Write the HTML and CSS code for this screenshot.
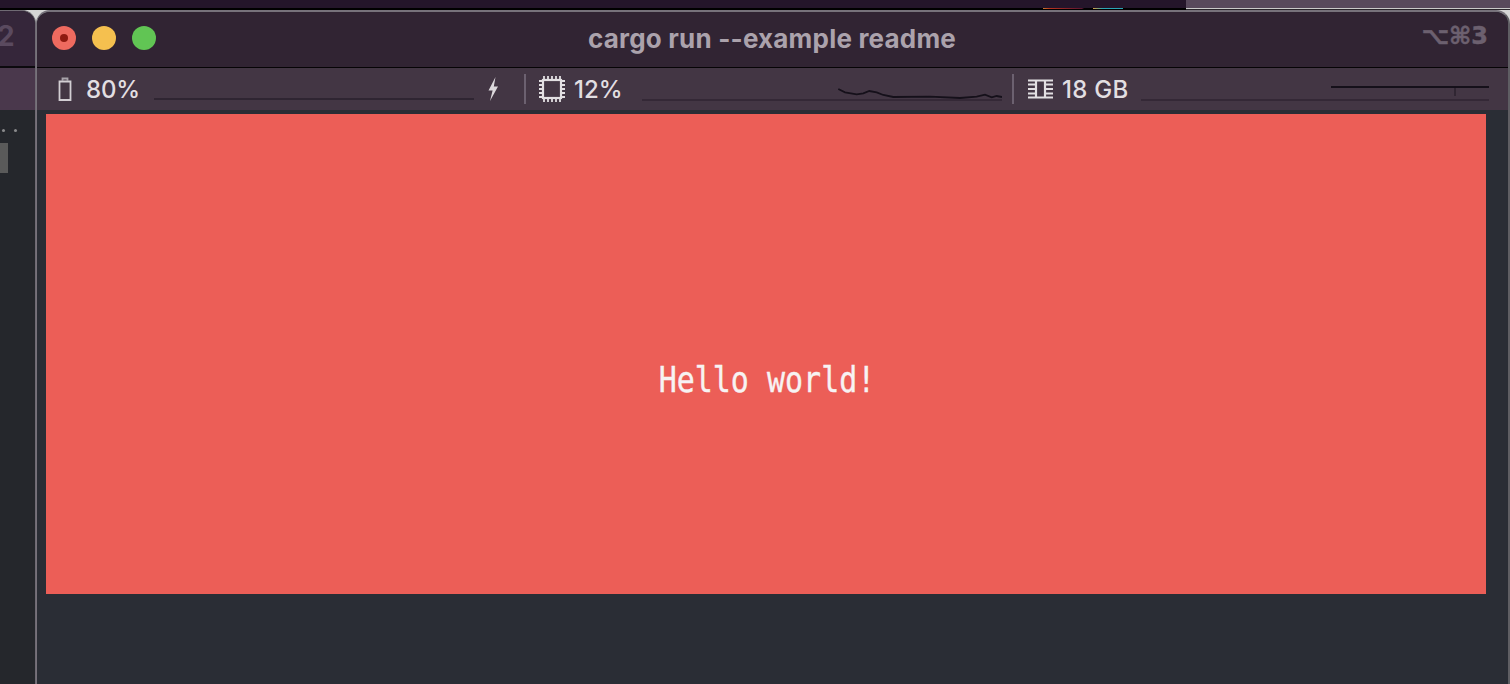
FILE: index.html
```html
<!DOCTYPE html>
<html lang="en">
<head>
<meta charset="utf-8">
<title>cargo run --example readme</title>
<link rel="stylesheet" href="styles.css">
</head>
<body>
<div class="desktop">
  <div class="strip"></div>

  <section class="window back">
    <div class="back-title"><span class="back-num">2</span></div>
    <div class="back-status"></div>
    <div class="back-body">
      <div class="dots"><i></i><i></i></div>
      <div class="block"></div>
    </div>
  </section>

  <section class="window front">
    <header class="titlebar">
      <div class="lights">
        <span class="light red"><i></i></span>
        <span class="light yellow"></span>
        <span class="light green"></span>
      </div>
      <div class="title">cargo run --example readme</div>
      <div class="shortcut">⌥⌘3</div>
    </header>
    <div class="status">
      <svg class="ico battery" width="14" height="25" viewBox="0 0 14 25" fill="none" stroke="#d2ced3" stroke-width="1.8"><path d="M1.500 4.500h11v18.500h-11z"/><path d="M4.500 4V1.500h5V4" stroke="#a8a3aa"/></svg>
      <span class="stat s-bat">80%</span>
      <span class="graph g-bat"></span>
      <svg class="ico bolt" width="12" height="26" viewBox="0 0 12 26"><path d="M8.500 1 1.500 14.500H5.600L3 25 11 10.500H6.800Z" fill="#dcd8dc"/></svg>
      <span class="divider d-1"></span>
      <svg class="ico cpu" width="26" height="26" viewBox="0 0 26 26" fill="none" stroke="#e2dfe2"><rect x="4" y="4" width="18" height="18" stroke-width="2.200"/><path stroke-width="1.800" d="M5 0v4M9 0v4M13 0v4M17 0v4M21 0v4M5 22v4M9 22v4M13 22v4M17 22v4M21 22v4M0 5h4M0 9h4M0 13h4M0 17h4M0 21h4M22 5h4M22 9h4M22 13h4M22 17h4M22 21h4"/></svg>
      <span class="stat s-cpu">12%</span>
      <svg class="graph-svg g-cpu" width="360" height="20" viewBox="0 0 360 20" fill="none"><path d="M0 18H360" stroke="#2f2532" stroke-width="1.500"/><polyline points="196.300,7 203,10.300 214.700,12.300 221.300,11.300 227.300,9 234.700,10.300 241.300,13 251.300,15 288,14.700 318,16 334.700,14.700 343,12.700 349.700,15.300 354.700,14 360,15" stroke="#15101a" stroke-width="1.800"/></svg>
      <span class="divider d-2"></span>
      <svg class="ico mem" width="25" height="20" viewBox="0 0 25 20" fill="none" stroke="#e2dfe2"><path stroke-width="2.200" d="M8 1.500H17M8 18.500H17M8 1.500V18.500M17 1.500V18.500"/><path stroke-width="1.800" d="M0 1.500H8M0 5.500H8M0 10H8M0 14.500H8M0 18.500H8M17 1.500H25M17 5.500H25M17 10H25M17 14.500H25M17 18.500H25"/></svg>
      <span class="stat s-mem">18 GB</span>
      <svg class="graph-svg g-mem" width="348" height="20" viewBox="0 0 348 20" fill="none"><path d="M0 18H348" stroke="#2f2532" stroke-width="1.500"/><path d="M190 5H348" stroke="#15101a" stroke-width="1.800"/><path d="M314 5V14" stroke="#15101a" stroke-width=".8"/></svg>
    </div>
    <main class="content">
      <div class="panel"><span class="hello">Hello world!</span></div>
    </main>
  </section>
</div>
</body>
</html>
```
FILE: styles.css
```css
* { box-sizing: border-box; }
html, body { margin: 0; height: 100%; overflow: hidden; background: #222327; }
.desktop { position: relative; width: 1510px; height: 684px; overflow: hidden; background: #d6d6d6; }

.strip {
  height: 10px;
  background:
    linear-gradient(90deg, #000 0 1043px, #c8792f 1043px, #b8321f 1050px, #5a1530 1082px, #000 1084px, #000 1093px, #d89a40 1093px, #2aa5b5 1103px, #2aa5b5 1123px, #000 1123px, #000 1186px, #c9c9c9 1186px) 0 8px / 100% 1px no-repeat,
    linear-gradient(#24152a 0 8px, #000 8px) 0 0 / 1186px 100% no-repeat,
    linear-gradient(#58495c 0 8px, #2a262c 8px);
}

.window { position: absolute; top: 10px; bottom: 0; overflow: hidden; }

.back { left: -40px; width: 76px; border-radius: 0 14px 0 0; border: solid #6f6a73; border-width: 1px 1px 0 0; background: #25272c; font-family: "Inter", "Liberation Sans", sans-serif; }
.back-title { height: 57px; background: #35263a; border-bottom: 2px solid #0c0a0e; padding: 6px 0 0 37px; }
.back-num { color: #5a4a5f; font-size: 28px; font-weight: 700; line-height: 38px; }
.back-status { height: 42px; background: #4a384c; }
.back-body { padding: 19px 0 0 40px; }
.dots { display: flex; gap: 9px; padding-left: 2px; }
.dots i { width: 3px; height: 3px; border-radius: 50%; background: #8a8a8c; }
.block { width: 8px; height: 30px; margin-top: 11px; background: #5a5a5a; }

.front { left: 36px; right: 0; border-radius: 14px 14px 0 0; border: solid #77727b; border-width: 2px 2px 0 1px; border-right-color: #5f5e63; background: #2a2d35; font-family: "Inter", "Liberation Sans", sans-serif; }

.titlebar { position: relative; display: flex; align-items: center; justify-content: center; height: 56px; padding: 0 1px 3px 0; background: #312433; border-bottom: 1.500px solid #060406; }
.lights { position: absolute; left: 15px; top: 14px; display: flex; gap: 16px; }
.light { display: flex; align-items: center; justify-content: center; width: 24px; height: 24px; border-radius: 50%; }
.light i { width: 8px; height: 8px; border-radius: 50%; background: #8f1a10; }
.red { background: #ee6a5f; }
.yellow { background: #f5c04f; }
.green { background: #61c554; }
.title { color: #aba2ac; font-size: 26px; font-weight: 700; letter-spacing: .2px; white-space: nowrap; }
.shortcut { position: absolute; right: 20px; top: 9px; color: #6c606f; font-family: "DejaVu Sans", sans-serif; font-size: 24px; font-weight: 700; line-height: 30px; -webkit-text-stroke: .5px #6c606f; }

.status { display: flex; align-items: center; height: 42px; padding-left: 21px; background: #433644; color: #e2dfe2; }
.ico { flex: none; }
.stat { padding-top: 1px; font-size: 24px; font-weight: 500; line-height: 42px; white-space: nowrap; }
.s-bat { width: 68px; margin-left: 14px; letter-spacing: -.2px; }
.graph { display: block; width: 320px; height: 1.500px; background: #2f2532; margin-top: 20px; }
.bolt { margin-left: 13px; }
.divider { width: 2px; height: 30px; background: #6c6170; }
.d-1 { margin-left: 25px; }
.cpu { margin-left: 13px; }
.s-cpu { width: 68px; margin-left: 9px; }
.graph-svg { flex: none; align-self: flex-start; margin-top: 14px; }
.d-2 { margin-left: 10px; }
.mem { margin-left: 14px; }
.s-mem { width: 79px; margin-left: 9px; letter-spacing: .3px; }

.content { padding-top: 4px; padding-left: 9px; }
.panel { display: flex; align-items: center; justify-content: center; width: 1440px; height: 480px; background: #ec5e57; }
.hello { display: block; margin: 52px 0 0 2px; color: #f7f3f3; font-family: "DejaVu Sans Mono", monospace; font-size: 30px; line-height: 36px; white-space: pre; transform: scaleY(1.18); -webkit-text-stroke: .3px #f7f3f3; }
```
